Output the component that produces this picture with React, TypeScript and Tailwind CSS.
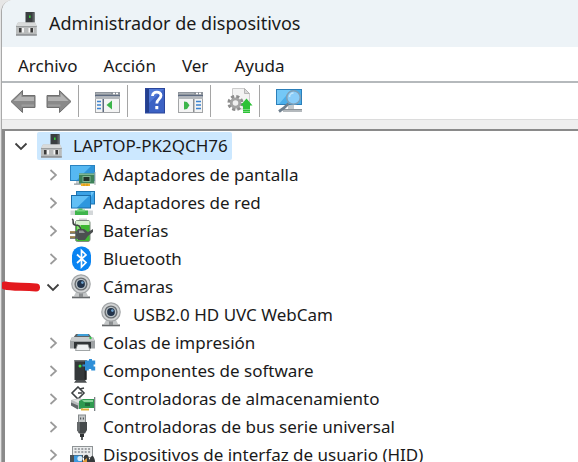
import { useState } from 'react';
import type { ReactNode } from 'react';

interface DeviceNode {
  label: string;
  icon: ReactNode;
  children?: DeviceNode[];
  open?: boolean;
  marked?: boolean;
}

const Icon = ({ children }: { children: ReactNode }) => (
  <svg
    width="26"
    height="26"
    viewBox="0 0 26 26"
    className="shrink-0"
    aria-hidden="true"
  >
    {children}
  </svg>
);

const ComputerIcon = () => (
  <Icon>
    <rect x="10.500" y="1" width="9" height="12" fill="#3a3e40" />
    <path d="M17.500 1.500h2V13h-2z" fill="#5a5f62" />
    <rect x="14" y="4.500" width="1.600" height="2.400" fill="#35d03a" />
    <path d="M3 11.500h17l1.800 3.500v9.500H1V15z" fill="#b9bbbb" />
    <path d="M3 11.500h17l1.600 3.500H1.200z" fill="#d9dbdb" />
    <path d="M1 15h20.800v1H1z" fill="#9b9e9f" />
    <path d="M1 23h20.800v1.800H1z" fill="#94979a" />
    <path d="M4 17h5v4.500H4zM13.500 17h5v4.500h-5z" fill="#f3f3f3" />
    <path d="M4 17h2.600v4.500H4zM15.400 17H18v4.500h-2.600z" fill="#3b3b3b" />
  </Icon>
);

const DisplayIcon = () => (
  <Icon>
    <rect x="0.5" y="3.5" width="24" height="15" fill="#2f95d9" stroke="#2a83c0" />
    <path d="M1 4h20L7 18H1z" fill="#56b8f2" />
    <path d="M6 19h6v3H6z" fill="#c3cacd" />
    <path d="M4 21.5h8v1.200H4z" fill="#8e979d" />
    <rect x="9" y="11.5" width="15.5" height="10" fill="#3d8259" />
    <path d="M9 11.5h15.5v1.5H9z" fill="#7fb594" />
    <rect x="13" y="14.5" width="7" height="5" fill="#23342b" stroke="#7fb594" strokeWidth="1" />
    <path d="M24.500 10h1v13h-1z" fill="#a4abaf" />
    <path d="M11 21.500h9v2.500h-9z" fill="#f0b429" />
    <path d="M14 21.500v2.500M17 21.500v2.500" stroke="#c98710" strokeWidth="0.800" />
  </Icon>
);

const NetworkIcon = () => (
  <Icon>
    <rect x="6.5" y="1.5" width="18" height="12.5" fill="#3ba2e6" stroke="#1d75b3" />
    <rect x="1.5" y="5.5" width="19" height="12.5" fill="#2e97de" stroke="#1a6ca8" />
    <path d="M2 6h17L7 17.5H2z" fill="#62bff5" />
    <path d="M21 2h3l-3 5z" fill="#6cc4f6" />
    <path d="M8.5 18.5h4v2h-4z" fill="#39a84a" />
    <path d="M0.5 20.5h22.5v4.5H0.5z" fill="#d3d7d9" />
    <path d="M5 20.5h13v4.5H5z" fill="#3fb54c" />
    <path d="M7 19.5h8v2H7z" fill="#77d67f" />
  </Icon>
);

const BatteryIcon = () => (
  <Icon>
    <path d="M9 0.5h8v2.5H9z" fill="#cfd3d3" />
    <rect x="5.5" y="2.5" width="14.5" height="21" rx="2" fill="#3fb832" stroke="#7f8c80" />
    <path d="M7 7h4v15H7z" fill="#86df70" />
    <path d="M6 3h13.5v4H6z" fill="#d9f2d1" />
    <path d="M2 1c3 1-1 5 3 6 4 0 5 1 6 5" fill="none" stroke="#3f4342" strokeWidth="1.6" />
    <path d="M8 11h6l4 3 5-3v3l-5 4-3 4H8l-2-3v-5z" fill="#4b4f50" />
    <path d="M9 12.5h4l2 2.500H9z" fill="#8f9394" />
    <path d="M0 14.5h8M0 19.5h8" stroke="#55595a" strokeWidth="2.4" />
    <path d="M0 14h5M0 19h5" stroke="#d8a23e" strokeWidth="1" />
  </Icon>
);

const BluetoothIcon = () => (
  <Icon>
    <rect x="2" y="0.5" width="19" height="24.5" rx="9" fill="#0a84f2" />
    <path
      d="M7 8.5l9 8-4.5 4.5V4.5L16 9l-9 8"
      fill="none"
      stroke="#fff"
      strokeWidth="1.7"
    />
  </Icon>
);

const CameraIcon = () => (
  <Icon>
    <path d="M6 18h10l2 4H4z" fill="#c4c7c8" />
    <path d="M2 22.5h18v1.8H2z" fill="#66696b" />
    <path d="M9 18h4v5H9z" fill="#8a8d8f" />
    <circle cx="11" cy="10" r="9.2" fill="#d2d4d5" stroke="#a3a6a8" strokeWidth="1.2" />
    <circle cx="11" cy="10" r="6.6" fill="#6a6f73" />
    <circle cx="11" cy="10" r="5.200" fill="#b9c1c6" />
    <circle cx="11" cy="10" r="3.9" fill="#22334a" />
    <circle cx="12.4" cy="8.6" r="1.3" fill="#6fa3cf" />
  </Icon>
);

const PrinterIcon = () => (
  <Icon>
    <path d="M6 4h13l3 4H3z" fill="#5c6468" />
    <path d="M8 4h10l1 2H7z" fill="#3f9fd8" />
    <path d="M2 7h21l2 4v7.500H0V11z" fill="#9ea2a4" />
    <path d="M2 7h21l1.400 4H0.600z" fill="#c9cccd" />
    <circle cx="20.500" cy="8" r="1.200" fill="#35c84a" />
    <path d="M4 12h17v6.500H4z" fill="#303436" />
    <path d="M7.500 14.500h10.500l2 6H5.500z" fill="#eef0f1" stroke="#8b8f91" strokeWidth="0.800" />
  </Icon>
);

const SoftwareIcon = () => (
  <Icon>
    <path d="M4.5 2h12v20h-12z" fill="#34383a" />
    <path d="M4.5 2h12v1.5h-12z" fill="#707577" />
    <path d="M14.5 3.5h2v18h-2z" fill="#222526" />
    <path d="M6 22h9l2 2.8H4z" fill="#4c5052" />
    <circle cx="10" cy="8" r="1.5" fill="#3fe04a" />
    <path
      d="M15 2.500h4V1h3v1.500h3.200v4h-1.600v2h1.600v4h-4v-1.400h-2.400v1.400H15V8.500h-2.500v-2H15z"
      fill="#2f8fd8"
    />
  </Icon>
);

const StorageIcon = () => (
  <Icon>
    <path d="M8 1l6 6-6 6-6-6z" fill="none" stroke="#3e4244" strokeWidth="1.6" />
    <path d="M8 7h4M10 3l4-1" stroke="#3e4244" strokeWidth="1.6" />
    <path d="M1 14l9-2 3 2v9H7l-6-4z" fill="#b8bbbc" />
    <path d="M1 16.5l7 3v4l-7-4z" fill="#63686a" />
    <path d="M2 14l7-1 3 2-4 2z" fill="#e3e4e4" />
    <path d="M9 15l4-2h11v9H13l-4 1z" fill="#2f9a50" />
    <path d="M12 14h11v2H14z" fill="#8bd49b" />
    <path d="M15 17h5v3h-5z" fill="#236b3a" />
    <path d="M24 11h1.3v14H24z" fill="#7b8285" />
    <path d="M11 22.5h8v2h-8z" fill="#e0b23a" />
  </Icon>
);

const UsbIcon = () => (
  <Icon>
    <rect x="8.5" y="1" width="7" height="8" fill="#c5c8c9" stroke="#85898b" />
    <path d="M10 3.5h1.2v2H10zM12.8 3.5H14v2h-1.2z" fill="#55595b" />
    <path d="M7 8h10v8l-2 3.5H9L7 16z" fill="#45494b" />
    <path d="M7 8h3v8.5L9 19l-2-3z" fill="#65696b" />
    <path d="M10 19.5h4V23h-4z" fill="#2f3234" />
    <path d="M11 23h2v3h-2z" fill="#585c5e" />
  </Icon>
);

const HidIcon = () => (
  <Icon>
    <rect x="2.5" y="4.5" width="20" height="11" fill="#e9ebec" stroke="#8f9496" />
    <path
      d="M4.5 7h16M4.5 10h16"
      stroke="#868b8e"
      strokeWidth="1.4"
      strokeDasharray="2 1.4"
    />
    <path d="M0 13h13v10H0z" fill="#4a5054" />
    <path d="M4 13.500h8V21H4z" fill="#3d9ae0" />
    <circle cx="10" cy="16.500" r="2.600" fill="#d7eaf7" />
    <path d="M14 14c3-3 5 0 5 3s2-5 4-3 3 8 1 9H14z" fill="#363a3c" />
    <path d="M13 19l4-3v7h-4z" fill="#df9a3b" />
  </Icon>
);

const ArrowIcon = ({ flip }: { flip?: boolean }) => (
  <svg
    width="26"
    height="26"
    viewBox="0 0 26 26"
    className={flip ? '-scale-x-100' : undefined}
    aria-hidden="true"
  >
    <path
      d="M1 13.500L12.500 2.500V7.500H25v12H12.500v5z"
      fill="#8a8a8a"
      stroke="#6f6f6f"
      strokeLinejoin="round"
    />
    <path d="M3.500 13L11.500 5.200V9H24v4z" fill="#b3b3b3" />
    <path d="M11.500 16.500H24v2H11.500z" fill="#9d9d9d" />
  </svg>
);

const PanelIcon = ({ flip }: { flip?: boolean }) => (
  <Icon>
    <rect x="0.5" y="4.5" width="24" height="20" fill="#f4f4f4" stroke="#a3a5a7" />
    <path d="M0 4h25v3H0z" fill="#8f959c" />
    <path d="M0 7h25v1.500H0z" fill="#5c6a80" />
    <path d="M0 8.500h25V11H0z" fill="#b3b7bb" />
    <path d="M1 5.500h15" stroke="#aab0b6" />
    <path d="M18 5.500h2M21 5.500h2" stroke="#fff" strokeWidth="1.4" />
    {flip ? (
      <>
        <path d="M15 11h1.500v13H15z" fill="#8c9094" />
        <path d="M18 13.500h5M18 17h5M18 20.500h5" stroke="#3b82d0" strokeWidth="1.600" />
        <path d="M6 13.500l3 .5 2.500 3.200L9 21l-3 .5z" fill="#3cb54a" />
      </>
    ) : (
      <>
        <path d="M7.500 11H9v13H7.500z" fill="#5c6a80" />
        <path d="M2 13.500h4M2 17h4M2 20.500h4" stroke="#3b82d0" strokeWidth="1.600" />
        <path d="M17 12.500v9L11.500 17z" fill="#3cb54a" />
      </>
    )}
  </Icon>
);

const HelpIcon = () => (
  <Icon>
    <rect x="3.5" y="0.5" width="19" height="24.5" fill="#3c62c4" stroke="#2b469b" />
    <path d="M4 1h3v23.500H4z" fill="#23408f" />
    <path d="M7 1h15L7 15z" fill="#5078d6" />
    <path
      d="M10.500 8c0-5 8.500-5 8.500-.5 0 3.500-4.200 3.500-4.200 8"
      fill="none"
      stroke="#fff"
      strokeWidth="2.800"
    />
    <rect x="13.300" y="18" width="3" height="3.200" fill="#fff" />
  </Icon>
);

const UpdateIcon = () => (
  <Icon>
    <path d="M5.500 0.500h12l5 5V21h-17z" fill="#f3f3f3" stroke="#cccccc" />
    <path d="M17.500 0.500v5h5z" fill="#d8d8d8" stroke="#b5b5b5" />
    <circle
      cx="8.500"
      cy="15"
      r="6.500"
      fill="none"
      stroke="#8d8d8d"
      strokeWidth="3.200"
      strokeDasharray="3 2.100"
    />
    <circle cx="8.500" cy="15" r="4.200" fill="#f0f0f0" stroke="#a3a3a3" strokeWidth="2.800" />
    <path d="M19.500 10.500l6 7H23V25h-7v-7.500h-2.500z" fill="#2cc236" />
    <path d="M16 21.500h7M16 23.500h7" stroke="#8ae08f" strokeWidth="0.800" />
  </Icon>
);

const ScanIcon = () => (
  <Icon>
    <rect x="0.500" y="1.500" width="25" height="15" fill="#4aaeea" stroke="#2b7fba" />
    <path d="M1 2h14L3 16H1z" fill="#74c8f7" />
    <path d="M12 17h6v4h-6z" fill="#c3c8cb" />
    <path d="M7 21.500h19V24H7z" fill="#b4b9bd" />
    <path d="M7 21.500h19" stroke="#8e959a" />
    <path d="M12.500 15.500L8 20l-5 3.500" fill="none" stroke="#6f7f8d" strokeWidth="2.800" />
    <circle cx="17.500" cy="9.500" r="6.800" fill="#8acdf9" stroke="#7fa0b8" strokeWidth="1.600" />
    <path d="M13.500 9a4 4 0 014-4" fill="none" stroke="#c4e7fc" strokeWidth="1.500" />
  </Icon>
);

const devices: DeviceNode[] = [
  { label: 'Adaptadores de pantalla', icon: <DisplayIcon />, children: [] },
  { label: 'Adaptadores de red', icon: <NetworkIcon />, children: [] },
  { label: 'Baterías', icon: <BatteryIcon />, children: [] },
  { label: 'Bluetooth', icon: <BluetoothIcon />, children: [] },
  {
    label: 'Cámaras',
    icon: <CameraIcon />,
    open: true,
    marked: true,
    children: [{ label: 'USB2.0 HD UVC WebCam', icon: <CameraIcon /> }],
  },
  { label: 'Colas de impresión', icon: <PrinterIcon />, children: [] },
  { label: 'Componentes de software', icon: <SoftwareIcon />, children: [] },
  { label: 'Controladoras de almacenamiento', icon: <StorageIcon />, children: [] },
  { label: 'Controladoras de bus serie universal', icon: <UsbIcon />, children: [] },
  { label: 'Dispositivos de interfaz de usuario (HID)', icon: <HidIcon />, children: [] },
];

const menus = ['Archivo', 'Acción', 'Ver', 'Ayuda'];

const Toggle = ({
  open,
  label,
  onClick,
}: {
  open: boolean;
  label: string;
  onClick: () => void;
}) => (
  <button
    onClick={onClick}
    aria-label={label}
    aria-expanded={open}
    className="flex h-7 w-8 shrink-0 items-center justify-center"
  >
    <svg width="14" height="14" viewBox="0 0 14 14" fill="none" aria-hidden="true">
      {open ? (
        <path d="M1.500 4.500L7 10l5.500-5.500" stroke="#404040" strokeWidth="1.800" />
      ) : (
        <path d="M4.500 2L10 7l-5.500 5" stroke="#9a9a9a" strokeWidth="1.700" />
      )}
    </svg>
  </button>
);

const RedMark = () => (
  <svg
    width="40"
    height="12"
    viewBox="0 0 40 12"
    className="absolute -left-9 top-2"
    aria-hidden="true"
  >
    <path
      d="M4 4.500C10 6 20 5.500 35 6.500"
      fill="none"
      stroke="#e3191d"
      strokeWidth="8"
      strokeLinecap="round"
    />
  </svg>
);

function TreeItem({ node }: { node: DeviceNode }) {
  const [open, setOpen] = useState(!!node.open);

  return (
    <li>
      <div className="relative flex h-7 items-center gap-[7px]">
        {node.marked && <RedMark />}
        <div className="flex items-center gap-px">
          {node.children ? (
            <Toggle open={open} label={node.label} onClick={() => setOpen(!open)} />
          ) : (
            <span className="w-8 shrink-0" />
          )}
          {node.icon}
        </div>
        <span className="whitespace-nowrap">{node.label}</span>
      </div>

      {open && node.children && (
        <ul className="ml-[30px]">
          {node.children.map((child) => (
            <TreeItem key={child.label} node={child} />
          ))}
        </ul>
      )}
    </li>
  );
}

const Separator = () => <div className="h-8 w-px shrink-0 bg-[#a5a5a5]" />;

export default function App() {
  const [open, setOpen] = useState(true);

  return (
    <div className="h-screen overflow-hidden bg-[#e6e6e6] pl-px font-['Noto_Sans',sans-serif] text-[17px] text-[#1a1a1a]">
      <div className="flex h-full flex-col overflow-hidden rounded-tl-xl border-l border-[#a9a9a9] bg-white">
        <header className="flex h-[47px] shrink-0 items-center gap-2 bg-[#edf3f7] pl-[13px]">
          <ComputerIcon />
          <h1 className="text-[18px]">Administrador de dispositivos</h1>
        </header>

        <nav className="flex h-9 shrink-0 items-center gap-[26px] border-b-2 border-[#b5b9bc] pl-4 pt-1">
          {menus.map((menu) => (
            <button key={menu}>{menu}</button>
          ))}
        </nav>

        <div className="flex h-9 shrink-0 items-center pl-2">
          <button aria-label="Atrás">
            <ArrowIcon />
          </button>
          <button aria-label="Adelante" className="ml-2.5 mr-1.5">
            <ArrowIcon flip />
          </button>
          <Separator />
          <button aria-label="Mostrar árbol" className="ml-4 mr-1.5">
            <PanelIcon />
          </button>
          <Separator />
          <button aria-label="Ayuda" className="ml-3.5">
            <HelpIcon />
          </button>
          <button aria-label="Mostrar acciones" className="ml-2.5 mr-1.5">
            <PanelIcon flip />
          </button>
          <Separator />
          <button aria-label="Actualizar controlador" className="ml-4 mr-1.5">
            <UpdateIcon />
          </button>
          <Separator />
          <button aria-label="Buscar cambios de hardware" className="ml-4">
            <ScanIcon />
          </button>
        </div>

        <div className="h-2.5 shrink-0 border-t border-[#dcdcdc] bg-[#efefef]" />

        <main className="grow border-l-3 border-t-2 border-[#8a8a8a] pt-px">
          <div className="flex h-7 items-center">
            <Toggle open={open} label="LAPTOP-PK2QCH76" onClick={() => setOpen(!open)} />
            <div className="flex h-7 items-center gap-[7px] rounded-xs bg-[#cce8ff] pl-[3px] pr-1">
              <ComputerIcon />
              <span>LAPTOP-PK2QCH76</span>
            </div>
          </div>

          {open && (
            <ul className="ml-8 mt-px">
              {devices.map((device) => (
                <TreeItem key={device.label} node={device} />
              ))}
            </ul>
          )}
        </main>
      </div>
    </div>
  );
}
